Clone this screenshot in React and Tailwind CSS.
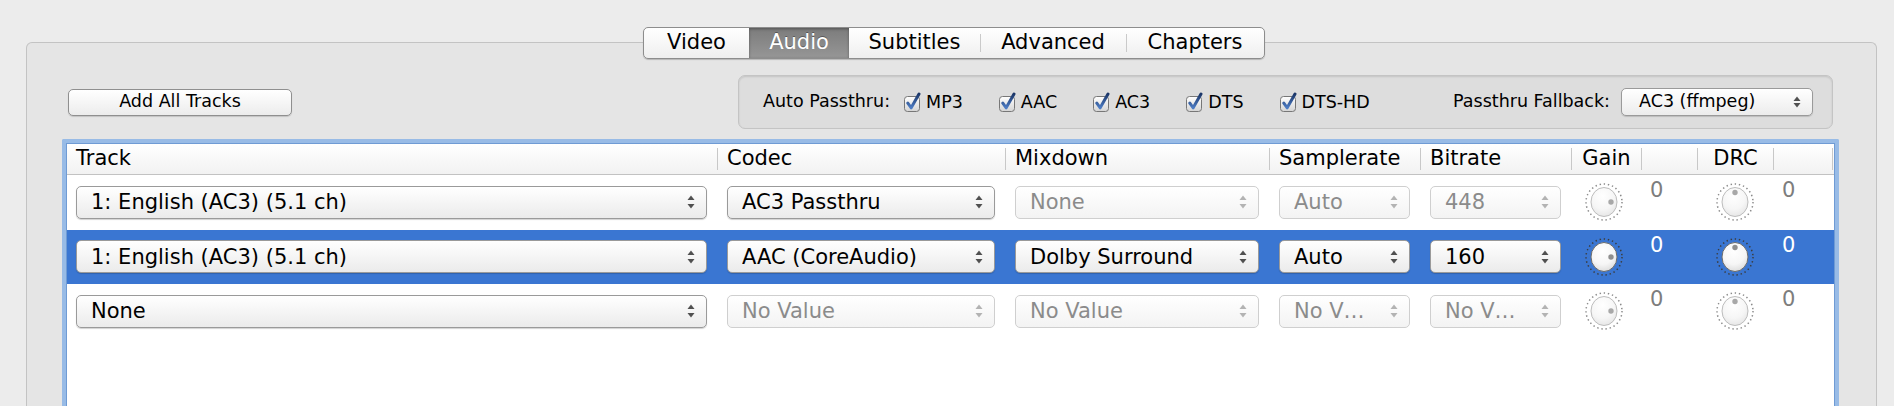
import React from 'react'

const TABS = [
  { label: 'Video', w: 'w-[105px]' },
  { label: 'Audio', w: 'w-[100px]', active: true },
  { label: 'Subtitles', w: 'w-[131px]' },
  { label: 'Advanced', w: 'w-[146px]' },
  { label: 'Chapters', w: 'w-[138px]' },
]

const COLS = [
  { label: 'Track', w: 'w-[651px]' },
  { label: 'Codec', w: 'w-[288px]' },
  { label: 'Mixdown', w: 'w-[264px]' },
  { label: 'Samplerate', w: 'w-[151px]' },
  { label: 'Bitrate', w: 'w-[151px]' },
  { label: 'Gain', w: 'w-[70px]', center: true },
  { label: '', w: 'w-[56px]' },
  { label: 'DRC', w: 'w-[76px]', center: true },
  { label: '', w: 'w-[59px]' },
]

const ROWS = [
  {
    cells: [
      ['1: English (AC3) (5.1 ch)', false],
      ['AC3 Passthru', false],
      ['None', true],
      ['Auto', true],
      ['448', true],
    ],
  },
  {
    selected: true,
    cells: [
      ['1: English (AC3) (5.1 ch)', false],
      ['AAC (CoreAudio)', false],
      ['Dolby Surround', false],
      ['Auto', false],
      ['160', false],
    ],
  },
  {
    cells: [
      ['None', false],
      ['No Value', true],
      ['No Value', true],
      ['No V…', true],
      ['No V…', true],
    ],
  },
]

const PASSTHRU = ['MP3', 'AAC', 'AC3', 'DTS', 'DTS-HD']

function Arrows({ disabled, size = 'lg' }) {
  const c = disabled ? '#b3b3b3' : '#505050'
  const h = size === 'lg' ? 14 : 12
  return (
    <svg width="8" height={h} viewBox={`0 0 8 ${h}`} className="shrink-0">
      <path d="M0.5 5 L4 0.5 L7.5 5 Z" fill={c} />
      <path d={`M0.5 ${h - 5} L4 ${h - 0.5} L7.5 ${h - 5} Z`} fill={c} />
    </svg>
  )
}

function Select({ value, disabled }) {
  return (
    <div
      className={`flex items-center justify-between h-[33px] rounded-[5px] border pl-[14px] pr-[11px] bg-linear-to-b text-[21px] ${
        disabled
          ? 'border-[#cfcfcf] from-white to-[#f3f3f3] text-[#8b8b8b]'
          : 'border-[#9a9a9a] from-white to-[#ebebeb] text-black shadow-[0_1px_1px_rgba(0,0,0,0.18)]'
      }`}
    >
      <span className="truncate leading-[26px]">{value}</span>
      <Arrows disabled={disabled} />
    </div>
  )
}

function Knob({ dot, active }) {
  const ring = active ? '#3c3c3c' : '#8a8a8a'
  const edge = active ? '#6b6b6b' : '#bdbdbd'
  const dotPos = dot === 'right' ? { cx: 27, cy: 21 } : { cx: 20, cy: 11.5 }
  const gid = active ? 'knobA' : 'knobD'
  return (
    <svg width="40" height="42" viewBox="0 0 40 42">
      <defs>
        <radialGradient id={gid} cx="0.45" cy="0.3" r="0.75">
          <stop offset="0" stopColor="#ffffff" />
          <stop offset="0.6" stopColor="#f6f6f6" />
          <stop offset="1" stopColor={active ? '#d9d9d9' : '#e4e4e4'} />
        </radialGradient>
      </defs>
      <circle cx="20" cy="21" r="18" fill="none" stroke={ring} strokeWidth="1.5" strokeDasharray="1.4 2.8" />
      <ellipse cx="20" cy="21" rx="13" ry="14.5" fill={`url(#${gid})`} stroke={edge} strokeWidth="1" />
      <circle cx={dotPos.cx} cy={dotPos.cy} r="2.7" fill={active ? '#8f8f8f' : '#a8a8a8'} />
    </svg>
  )
}

function Checkbox() {
  return (
    <svg width="20" height="21" viewBox="0 0 20 21" className="shrink-0">
      <defs>
        <linearGradient id="cbx" x1="0" y1="0" x2="0" y2="1">
          <stop offset="0" stopColor="#ffffff" />
          <stop offset="1" stopColor="#d4d4d4" />
        </linearGradient>
        <linearGradient id="chk" x1="0" y1="0" x2="0" y2="1">
          <stop offset="0" stopColor="#1b3668" />
          <stop offset="1" stopColor="#4d7cc4" />
        </linearGradient>
      </defs>
      <rect x="1.5" y="4.5" width="15" height="15" rx="3" fill="url(#cbx)" stroke="#777777" />
      <path
        d="M4.8 11.2 L8.2 15.8 L16 2"
        fill="none"
        stroke="url(#chk)"
        strokeWidth="3"
        strokeLinecap="round"
        strokeLinejoin="round"
      />
    </svg>
  )
}

export default function App() {
  return (
    <div className="h-[406px] overflow-hidden bg-[#ececec] flex flex-col font-['DejaVu_Sans','Verdana',sans-serif] text-[#111]">
      {/* tabs */}
      <div className="pt-[27px] pl-[14px] flex justify-center relative z-10">
        <div className="flex h-[32px] rounded-[5px] border border-[#8d8d8d] bg-linear-to-b from-white to-[#efefef] shadow-[0_1px_1px_rgba(0,0,0,0.2)] overflow-hidden">
          {TABS.map((t, i) => (
            <div
              key={t.label}
              className={`${t.w} flex items-center justify-center text-[21px] leading-none relative ${
                t.active
                  ? 'bg-linear-to-b from-[#7c7c7c] to-[#969696] text-white shadow-[inset_0_1px_3px_rgba(0,0,0,0.35)] [text-shadow:0_-1px_0_rgba(0,0,0,0.35)]'
                  : 'text-black'
              }`}
            >
              {i > 2 && <span className="absolute left-0 top-[6px] bottom-[6px] w-px bg-[#cacaca]" />}
              <span className="pb-[1px]">{t.label}</span>
            </div>
          ))}
        </div>
      </div>

      {/* group box */}
      <div className="ml-[26px] w-[1851px] -mt-[17px] flex-1 rounded-t-[6px] border border-b-0 border-[#c3c3c3] bg-[#e5e5e5]">
        <div className="flex items-center pt-[32px] pl-[41px] pr-[43px]">
          <button className="w-[224px] h-[27px] rounded-[5px] border border-[#8f8f8f] bg-linear-to-b from-white to-[#ececec] shadow-[0_1px_1px_rgba(0,0,0,0.15)] text-[17.5px] leading-none text-black">
            Add All Tracks
          </button>

          <div className="ml-auto w-[1095px] h-[54px] rounded-[7px] border border-[#c4c4c4] bg-[#dddddd] shadow-[inset_0_1px_2px_rgba(0,0,0,0.12)] flex items-center pl-[24px] pr-[19px] text-[17.5px] leading-none text-black">
            <span>Auto Passthru:</span>
            <div className="flex items-center gap-[35px] ml-[13px]">
              {PASSTHRU.map((p) => (
                <div key={p} className="flex items-center gap-[3px]">
                  <Checkbox />
                  <span className="pt-[2px]">{p}</span>
                </div>
              ))}
            </div>
            <span className="ml-auto mr-[11px]">Passthru Fallback:</span>
            <div className="w-[192px] h-[28px] rounded-[5px] border border-[#9a9a9a] bg-linear-to-b from-white to-[#ececec] shadow-[0_1px_1px_rgba(0,0,0,0.15)] flex items-center justify-between pl-[17px] pr-[11px]">
              <span className="pb-[1px]">AC3 (ffmpeg)</span>
              <Arrows size="sm" />
            </div>
          </div>
        </div>

        {/* track table */}
        <div className="mt-[10px] ml-[35px] mr-[37px] h-[300px] border-[4px] border-b-0 border-[#98bbe6] rounded-t-[2px]">
          <div className="h-full border border-b-0 border-[#6f9bd4] bg-white">
            <div className="flex h-[31px] border-b border-[#c2c2c2] bg-linear-to-b from-white to-[#f2f2f2]">
              {COLS.map((c, i) => (
                <div key={i} className={`${c.w} flex items-center shrink-0`}>
                  <span
                    className={`flex-1 text-[21px] leading-none text-black pb-[2px] ${
                      c.center ? 'text-center' : 'pl-[9px]'
                    }`}
                  >
                    {c.label}
                  </span>
                  <span className="w-px h-[22px] bg-[#c8c8c8]" />
                </div>
              ))}
            </div>

            {ROWS.map((row, ri) => (
              <div
                key={ri}
                className={`flex h-[54.5px] ${row.selected ? 'bg-[#3a76d2]' : 'bg-white'}`}
              >
                {row.cells.map(([v, dis], ci) => (
                  <div key={ci} className={`${COLS[ci].w} shrink-0 flex flex-col justify-center pl-[9px] pr-[11px]`}>
                    <Select value={v} disabled={dis} />
                  </div>
                ))}
                <div className="w-[70px] shrink-0 flex items-center justify-center pr-[6px]">
                  <Knob dot="right" active={row.selected} />
                </div>
                <div
                  className={`w-[56px] shrink-0 pl-[8px] pt-[5px] text-[21px] leading-none ${
                    row.selected ? 'text-white' : 'text-[#7d7d7d]'
                  }`}
                >
                  0
                </div>
                <div className="w-[76px] shrink-0 flex items-center justify-center pr-[3px]">
                  <Knob dot="top" active={row.selected} />
                </div>
                <div
                  className={`w-[59px] shrink-0 pl-[8px] pt-[5px] text-[21px] leading-none ${
                    row.selected ? 'text-white' : 'text-[#7d7d7d]'
                  }`}
                >
                  0
                </div>
              </div>
            ))}
          </div>
        </div>
      </div>
    </div>
  )
}
